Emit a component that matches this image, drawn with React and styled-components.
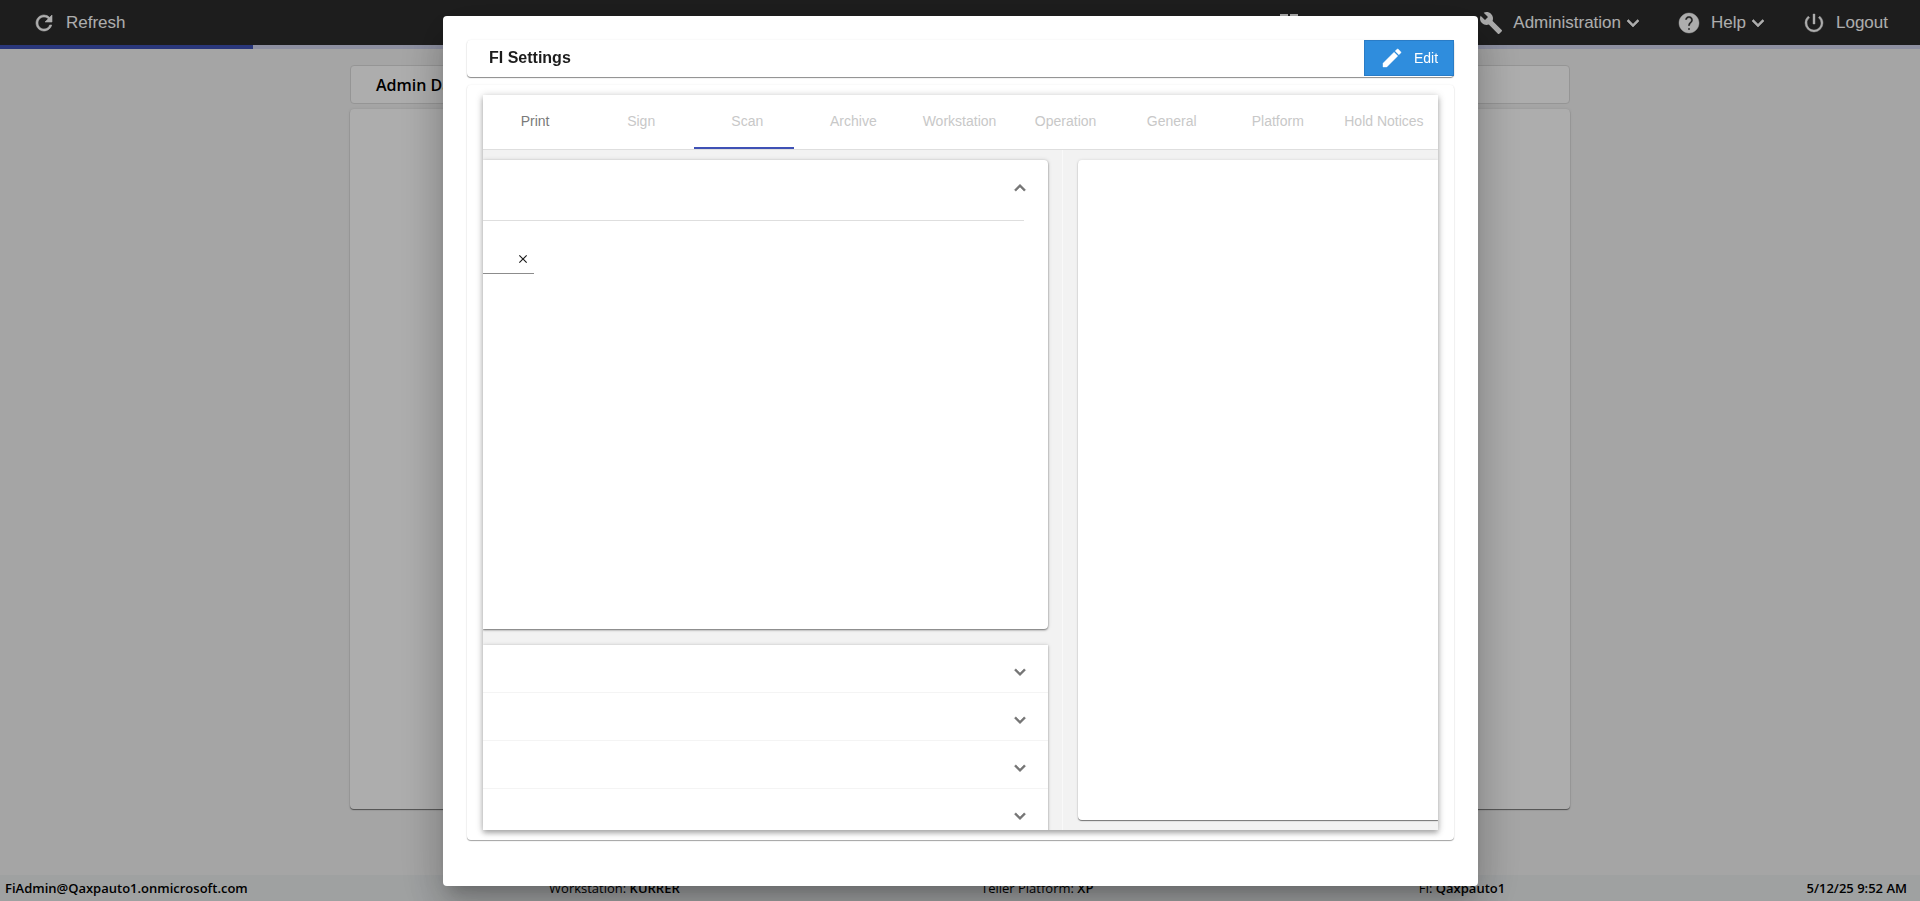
import React from 'react'
import styled, { createGlobalStyle } from 'styled-components'
import {
  MdRefresh,
  MdBuild,
  MdHelp,
  MdPowerSettingsNew,
  MdEdit,
  MdDashboard,
  MdExpandMore,
  MdExpandLess,
  MdClose,
} from 'react-icons/md'

const tabs = [
  'Print',
  'Sign',
  'Scan',
  'Archive',
  'Workstation',
  'Operation',
  'General',
  'Platform',
  'Hold Notices',
]

const sections = ['section-1', 'section-2', 'section-3', 'section-4']

const App = () => {
  return (
    <>
      <GlobalStyle />
      <Page>
        <NavBar>
          <NavButton>
            <MdRefresh size={24} strokeWidth={0.6} />
            Refresh
          </NavButton>
          <NavRight>
            <NavButton $wide aria-label='Dashboard'>
              <MdDashboard size={24} />
            </NavButton>
            <NavButton>
              <MdBuild size={24} />
              <span>
                Administration
                <MdExpandMore size={24} strokeWidth={0.6} />
              </span>
            </NavButton>
            <NavButton>
              <MdHelp size={24} strokeWidth={0.4} />
              <span>
                Help
                <MdExpandMore size={24} strokeWidth={0.6} />
              </span>
            </NavButton>
            <NavButton>
              <MdPowerSettingsNew size={24} strokeWidth={0.4} />
              Logout
            </NavButton>
          </NavRight>
        </NavBar>
        <Progress>
          <ProgressFill />
        </Progress>
        <Dashboard>
          <DashboardTitle>Admin Dashboard</DashboardTitle>
          <DashboardCard />
        </Dashboard>
        <Footer>
          <b>FiAdmin@Qaxpauto1.onmicrosoft.com</b>
          <span>Workstation: <b>KURRER</b></span>
          <Platform>Teller Platform: <b>XP</b></Platform>
          <span>FI: <b>Qaxpauto1</b></span>
          <b>5/12/25 9:52 AM</b>
        </Footer>
      </Page>

      <Backdrop>
        <Dialog role='dialog' aria-modal='true' aria-labelledby='dialog-title'>
          <DialogHeader>
            <h2 id='dialog-title'>FI Settings</h2>
            <EditButton>
              <MdEdit size={24} strokeWidth={0.4} />
              Edit
            </EditButton>
          </DialogHeader>
          <DialogBody>
            <Panel>
              <Tabs role='tablist'>
                {tabs.map((tab, i) => (
                  <Tab key={tab} role='tab' $enabled={i === 0} aria-selected={tab === 'Scan'}>
                    {tab}
                  </Tab>
                ))}
                <InkBar />
              </Tabs>
              <Content>
                <LeftColumn>
                  <OpenCard>
                    <OpenHeader>
                      <IconButton aria-label='Collapse'>
                        <MdExpandLess size={22} strokeWidth={0.6} />
                      </IconButton>
                    </OpenHeader>
                    <Field>
                      <input aria-label='Value' />
                      <IconButton aria-label='Clear' $dark>
                        <MdClose size={14} />
                      </IconButton>
                    </Field>
                  </OpenCard>
                  <Accordion>
                    {sections.map((id) => (
                      <AccordionRow key={id}>
                        <IconButton aria-label='Expand'>
                          <MdExpandMore size={22} strokeWidth={0.6} />
                        </IconButton>
                      </AccordionRow>
                    ))}
                  </Accordion>
                </LeftColumn>
                <RightColumn>
                  <SideCard />
                </RightColumn>
              </Content>
            </Panel>
          </DialogBody>
        </Dialog>
      </Backdrop>
    </>
  )
}

export default App

const GlobalStyle = createGlobalStyle`
  *{
    box-sizing: border-box;
  }

  body{
    margin: 0;
    font-family: 'Liberation Sans', Arial, sans-serif;
    overflow: hidden;
  }

  button, input{
    font-family: inherit;
    border: none;
    background: none;
    padding: 0;
    outline: none;
  }

  svg{
    flex-shrink: 0;
  }

  /* the icons carry an empty bounding path */
  svg path[fill='none']{
    stroke: none;
  }
`

const Page = styled.div`
  height: 100vh;
  display: flex;
  flex-direction: column;
  background-color: #f3f3f3;
`

const NavBar = styled.header`
  height: 45px;
  flex-shrink: 0;
  padding: 0 32px;

  display: flex;
  justify-content: space-between;
  align-items: center;

  background-color: #2c2c2c;
`

const NavRight = styled.nav`
  display: flex;
  align-items: center;
  gap: 32px;
`

const NavButton = styled.button`
  min-width: ${({ $wide }) => ($wide ? '170px' : '0')};

  display: flex;
  align-items: center;
  gap: 10px;

  color: white;
  font-size: 17px;
  line-height: 22px;

  span{
    display: flex;
    align-items: center;
  }
`

const Progress = styled.div`
  height: 4px;
  flex-shrink: 0;
  background-color: #d1d5ee;
`

const ProgressFill = styled.div`
  width: 253px;
  height: 4px;
  background-color: #3f51b5;
`

const Dashboard = styled.main`
  flex: 1;
  padding: 16px 350px 66px;

  display: flex;
  flex-direction: column;
  gap: 5px;
`

const DashboardTitle = styled.h1`
  height: 39px;
  margin: 0;
  padding: 0 25px;

  border: 1px solid #dcdcdc;
  border-radius: 4px;
  background-color: white;

  color: black;
  font-family: 'Open Sans', 'Noto Sans', sans-serif;
  font-size: 16px;
  font-weight: 600;
  line-height: 38px;
`

const DashboardCard = styled.section`
  flex: 1;
  border-radius: 4px;
  background-color: white;
  box-shadow: 0 1px 1px rgba(0, 0, 0, 0.5), 0 0 3px rgba(0, 0, 0, 0.1);
`

const Footer = styled.footer`
  height: 26px;
  flex-shrink: 0;
  padding: 0 13px 0 5px;

  display: flex;
  justify-content: space-between;
  align-items: center;

  background-color: #eaedee;

  font-family: 'Open Sans', 'Noto Sans', sans-serif;
  font-size: 13px;
  line-height: 18px;

  b{
    font-weight: 600;
  }
`

const Platform = styled.span`
  margin-right: 24px;
`

const Backdrop = styled.div`
  position: fixed;
  inset: 0;
  padding: 16px 0 15px;

  display: grid;
  grid-template-columns: 443fr 1035fr 442fr;

  background-color: rgba(0, 0, 0, 0.32);
`

const Dialog = styled.div`
  grid-column: 2;
  min-width: 0;
  min-height: 0;
  padding: 24px 24px 46px;

  display: flex;
  flex-direction: column;
  gap: 8px;

  border-radius: 4px;
  background-color: white;
  box-shadow: 0 11px 15px -7px rgba(0, 0, 0, 0.2), 0 24px 38px 3px rgba(0, 0, 0, 0.14),
    0 9px 46px 8px rgba(0, 0, 0, 0.12);
`

const DialogHeader = styled.div`
  padding: 0 0 1px 22px;

  display: flex;
  justify-content: space-between;
  align-items: center;

  border-radius: 4px;
  box-shadow: 0 1px 1px rgba(0, 0, 0, 0.45), 0 0 2px rgba(0, 0, 0, 0.08);

  h2{
    margin: 0;
    font-size: 16px;
    font-weight: 700;
    line-height: 20px;
    color: #1c1c1c;
  }
`

const EditButton = styled.button`
  width: 90px;
  height: 36px;

  display: flex;
  justify-content: center;
  align-items: center;
  gap: 10px;

  border: 1px solid #2a7cc6;
  background-color: #2f8ddd;
  color: white;
  font-size: 14px;
`

const DialogBody = styled.div`
  flex: 1;
  min-height: 0;
  padding: 10px 16px;

  display: flex;

  border-radius: 4px;
  box-shadow: 0 1px 1px rgba(0, 0, 0, 0.35), 0 0 2px rgba(0, 0, 0, 0.08);
`

const Panel = styled.div`
  flex: 1;
  min-width: 0;

  display: flex;
  flex-direction: column;

  background-color: #f2f2f2;
  box-shadow: 0 3px 5px rgba(0, 0, 0, 0.25), 0 1px 8px rgba(0, 0, 0, 0.2);
`

const Tabs = styled.div`
  position: relative;
  height: 55px;
  flex-shrink: 0;

  display: grid;
  grid-template-columns: repeat(9, 1fr);

  border-bottom: 1px solid #dedede;
  background-color: white;
`

const Tab = styled.button`
  padding: 0 2px 2px 0;
  font-size: 14px;
  white-space: nowrap;
  color: ${({ $enabled }) => ($enabled ? '#7a7a7a' : '#c8c8c8')};
`

const InkBar = styled.span`
  position: absolute;
  left: 211px;
  bottom: 0;
  width: 100px;
  height: 2px;
  background-color: #3f51b5;
`

const Content = styled.div`
  flex: 1;
  min-height: 0;
  overflow: hidden;

  display: grid;
  grid-template-columns: 580fr 375fr;
  grid-template-rows: 100%;
`

const LeftColumn = styled.div`
  min-width: 0;
  padding: 10px 14px 0 0;
  border-right: 1px solid #f9f9f9;

  display: flex;
  flex-direction: column;
  gap: 16px;
`

const RightColumn = styled.div`
  min-width: 0;
  padding: 10px 0 10px 15px;
  display: flex;
`

const OpenCard = styled.section`
  height: 469px;
  flex-shrink: 0;

  border-radius: 0 4px 4px 0;
  background-color: white;
  box-shadow: 0 1px 2px rgba(0, 0, 0, 0.5), 0 0 4px rgba(0, 0, 0, 0.15);
`

const OpenHeader = styled.div`
  height: 61px;
  margin-right: 24px;
  padding: 0 0 4px;

  display: flex;
  justify-content: flex-end;
  align-items: center;

  border-bottom: 1px solid #dedede;

  button{
    margin-right: -7px;
  }
`

const Field = styled.div`
  width: 51px;
  height: 32px;
  margin-top: 21px;
  padding: 2px 4px 0 0;

  display: flex;
  align-items: center;

  border-bottom: 1px solid #8c8c8c;

  input{
    flex: 1;
    min-width: 0;
  }
`

const IconButton = styled.button`
  display: flex;
  color: ${({ $dark }) => ($dark ? '#1c1c1c' : '#757575')};
`

const Accordion = styled.div`
  background-color: white;
  box-shadow: 0 1px 2px rgba(0, 0, 0, 0.3), 0 0 4px rgba(0, 0, 0, 0.15);
`

const AccordionRow = styled.div`
  height: 48px;
  padding: 6px 17px 0 0;

  display: flex;
  justify-content: flex-end;
  align-items: center;

  border-bottom: 1px solid #f4f4f4;
`

const SideCard = styled.section`
  flex: 1;
  border-radius: 4px 0 0 4px;
  background-color: white;
  box-shadow: 0 1px 1px rgba(0, 0, 0, 0.5), 0 0 3px rgba(0, 0, 0, 0.12);
`
